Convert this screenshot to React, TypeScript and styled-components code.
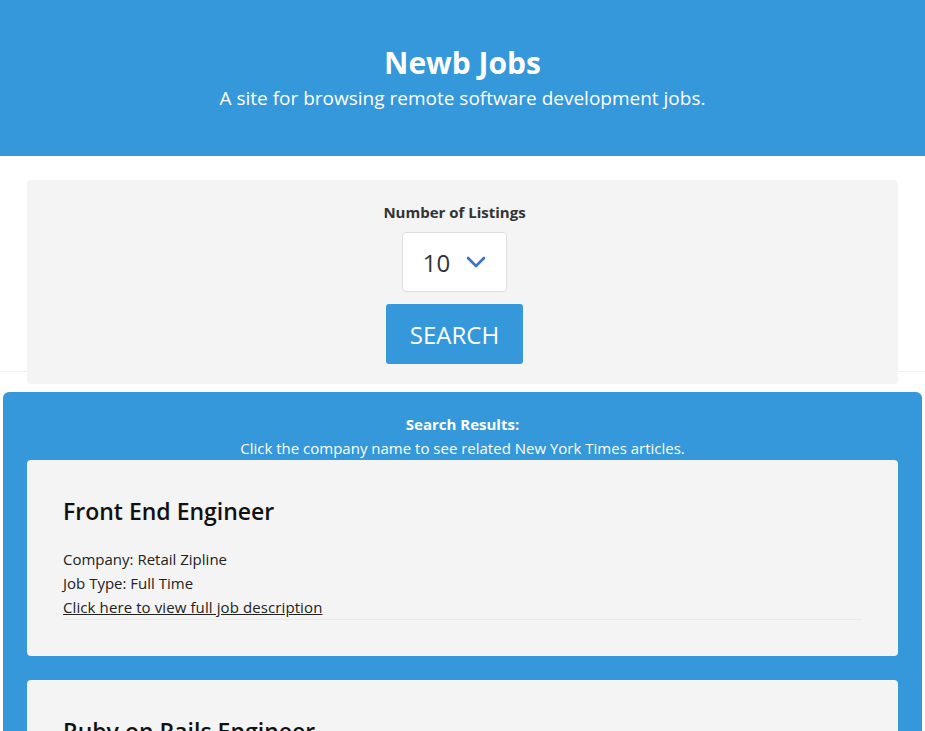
import React from 'react'
import styled, { createGlobalStyle } from 'styled-components'

const GlobalStyle = createGlobalStyle`
  html, body {
    margin: 0;
    padding: 0;
    background: #fff;
    font-family: 'Segoe UI', 'Open Sans', 'Noto Sans', sans-serif;
    color: #222;
  }
  * { box-sizing: border-box; }
`

const Header = styled.header`
  background-color: #3498db;
  color: #fff;
  height: 156px;
  display: flex;
  flex-direction: column;
  align-items: center;
  padding-top: 43px;
`

const Title = styled.h1`
  margin: 0;
  font-size: 30px;
  line-height: 40px;
  font-weight: 700;
`

const Subtitle = styled.p`
  margin: 0;
  font-size: 19px;
  line-height: 30px;
`

const SearchSection = styled.section`
  position: relative;
  padding: 24px 27px 8px;

  &::after {
    content: '';
    position: absolute;
    left: 0;
    right: 0;
    bottom: 20px;
    height: 1px;
    background: #f1f1f1;
  }
`

const SearchPanel = styled.form`
  position: relative;
  z-index: 1;
  background: #f4f4f4;
  border-radius: 4px;
  padding: 22px 16px 20px 0;
  display: flex;
  flex-direction: column;
  align-items: center;
`

const Label = styled.label`
  font-size: 15px;
  line-height: 20px;
  font-weight: 700;
  color: #333;
  margin-bottom: 10px;
`

const SelectBox = styled.div`
  width: 105px;
  height: 60px;
  background: #fff;
  border: 1px solid #dedede;
  border-radius: 4px;
  display: flex;
  align-items: center;
  justify-content: center;
  gap: 16px;
  font-size: 24px;
  color: #333;
  margin-bottom: 12px;
`

const SearchButton = styled.button`
  width: 137px;
  height: 60px;
  border: none;
  border-radius: 3px;
  background: #3498db;
  color: #fff;
  font-family: inherit;
  font-size: 24px;
  text-transform: uppercase;
`

const Results = styled.section`
  margin: 0 3px;
  background: #3498db;
  border-radius: 6px;
  padding: 20px 24px 0;
  display: flex;
  flex-direction: column;
  gap: 24px;
`

const ResultsHeading = styled.div`
  color: #fff;
  text-align: center;
  font-size: 15px;
  line-height: 24px;
  margin-bottom: -24px;

  strong {
    display: block;
    font-weight: 700;
  }
`

const Card = styled.article`
  background: #f4f4f4;
  border-radius: 4px;
  padding: 36px;
`

const JobTitle = styled.h2`
  margin: 0 0 21px;
  font-size: 23px;
  line-height: 30px;
  font-weight: 600;
  color: #111;
`

const Line = styled.div`
  font-size: 15px;
  line-height: 24px;
  color: #222;
`

const Link = styled.a`
  color: #222;
  text-decoration: underline;
  letter-spacing: 0.1px;
`

const Rule = styled.hr`
  margin: 0;
  border: none;
  border-top: 1px solid #e9e9e9;
`

const Chevron = () => (
  <svg width="20" height="12" viewBox="0 0 20 12" fill="none">
    <path d="M2 2l8 8 8-8" stroke="#3b74c6" strokeWidth="2.6" strokeLinecap="round" strokeLinejoin="round" />
  </svg>
)

const jobs = [
  { title: 'Front End Engineer', company: 'Retail Zipline', type: 'Full Time' },
  { title: 'Ruby on Rails Engineer', company: 'Retail Zipline', type: 'Full Time' },
]

export default function App() {
  return (
    <>
      <GlobalStyle />
      <Header>
        <Title>Newb Jobs</Title>
        <Subtitle>A site for browsing remote software development jobs.</Subtitle>
      </Header>
      <SearchSection>
        <SearchPanel onSubmit={e => e.preventDefault()}>
          <Label>Number of Listings</Label>
          <SelectBox>
            <span>10</span>
            <Chevron />
          </SelectBox>
          <SearchButton type="submit">Search</SearchButton>
        </SearchPanel>
      </SearchSection>
      <Results>
        <ResultsHeading>
          <strong>Search Results:</strong>
          Click the company name to see related New York Times articles.
        </ResultsHeading>
        {jobs.map(job => (
          <Card key={job.title}>
            <JobTitle>{job.title}</JobTitle>
            <Line>Company: {job.company}</Line>
            <Line>Job Type: {job.type}</Line>
            <Line>
              <Link href="#">Click here to view full job description</Link>
            </Line>
            <Rule />
          </Card>
        ))}
      </Results>
    </>
  )
}
